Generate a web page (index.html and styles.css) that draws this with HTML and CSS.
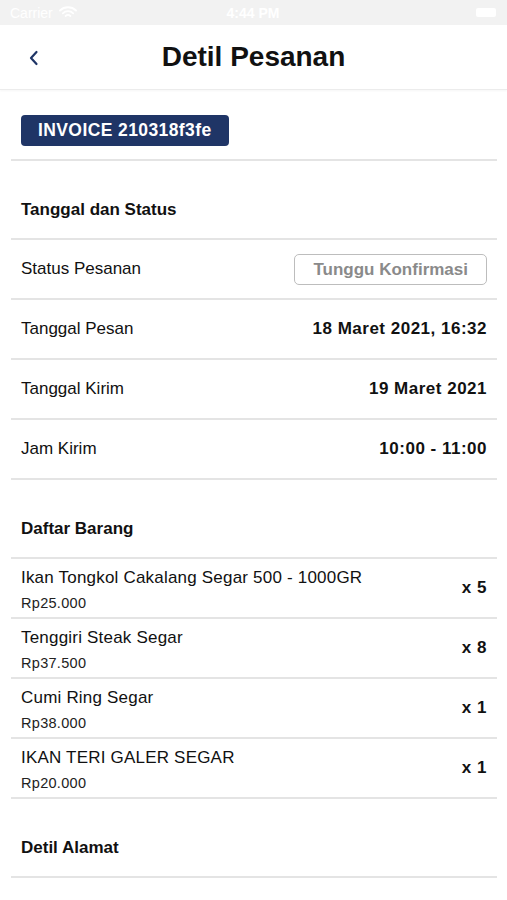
FILE: index.html
```html
<!DOCTYPE html>
<html lang="id">
<head>
    <meta charset="UTF-8">
    <meta name="viewport" content="width=device-width, initial-scale=1.0">
    <title>Detil Pesanan</title>
    <link rel="stylesheet" href="styles.css">
</head>
<body>

    <!-- Status Bar -->
    <div class="status-bar">
        <div class="carrier">
            Carrier
            <svg width="18" height="13" viewBox="0 0 18 13">
                <path d="M1 4.5a11.5 11.5 0 0 1 16 0M3.8 7.3a7.5 7.5 0 0 1 10.4 0M6.6 10a3.5 3.5 0 0 1 4.8 0" fill="none" stroke="#fff" stroke-width="1.8" stroke-linecap="round"/>
            </svg>
        </div>
        <div class="clock">4:44 PM</div>
        <div class="battery"></div>
    </div>

    <!-- Navigation -->
    <div class="nav">
        <svg class="back" width="12" height="16" viewBox="0 0 12 16">
            <path d="M8.5 2L3 8l5.5 6" fill="none" stroke="#1f3566" stroke-width="2.2" stroke-linecap="round" stroke-linejoin="round"/>
        </svg>
        <h1>Detil Pesanan</h1>
    </div>

    <div class="content">
        <div class="invoice-block">
            <span class="invoice">INVOICE 210318f3fe</span>
        </div>

        <!-- Tanggal dan Status -->
        <div class="section-head">Tanggal dan Status</div>
        <div class="row">
            <span>Status Pesanan</span>
            <span class="pill">Tunggu Konfirmasi</span>
        </div>
        <div class="row">
            <span>Tanggal Pesan</span>
            <span class="value">18 Maret 2021, 16:32</span>
        </div>
        <div class="row">
            <span>Tanggal Kirim</span>
            <span class="value">19 Maret 2021</span>
        </div>
        <div class="row">
            <span>Jam Kirim</span>
            <span class="value">10:00 - 11:00</span>
        </div>

        <!-- Daftar Barang -->
        <div class="section-head">Daftar Barang</div>
        <div class="row item">
            <div class="item-info">
                <div class="item-name">Ikan Tongkol Cakalang Segar 500 - 1000GR</div>
                <div class="item-price">Rp25.000</div>
            </div>
            <span class="value">x 5</span>
        </div>
        <div class="row item">
            <div class="item-info">
                <div class="item-name">Tenggiri Steak Segar</div>
                <div class="item-price">Rp37.500</div>
            </div>
            <span class="value">x 8</span>
        </div>
        <div class="row item">
            <div class="item-info">
                <div class="item-name">Cumi Ring Segar</div>
                <div class="item-price">Rp38.000</div>
            </div>
            <span class="value">x 1</span>
        </div>
        <div class="row item">
            <div class="item-info">
                <div class="item-name">IKAN TERI GALER SEGAR</div>
                <div class="item-price">Rp20.000</div>
            </div>
            <span class="value">x 1</span>
        </div>

        <!-- Detil Alamat -->
        <div class="section-head">Detil Alamat</div>
    </div>

</body>
</html>
```

FILE: styles.css
```css
body {
    margin: 0;
    font-family: "Liberation Sans", Arial, sans-serif;
    color: #111;
    background-color: #fff;
}
.status-bar {
    height: 25px;
    background-color: #f2f2f2;
    color: #fff;
    font-size: 14px;
    display: flex;
    align-items: center;
    justify-content: space-between;
    padding: 0 11px 0 10px;
}
.carrier {
    display: flex;
    align-items: center;
    gap: 6px;
    width: 90px;
}
.clock {
    font-weight: bold;
}
.battery {
    width: 20px;
    height: 9px;
    background: #fff;
    border-radius: 2px;
    margin-left: 70px;
}
.nav {
    height: 64px;
    display: flex;
    align-items: center;
    justify-content: center;
    position: relative;
    border-bottom: 1px solid #ececec;
    box-shadow: 0 1px 2px rgba(0, 0, 0, 0.04);
}
.back {
    position: absolute;
    left: 28px;
    top: 25px;
}
h1 {
    margin: 0;
    font-size: 28px;
    font-weight: bold;
    color: #111;
}
.content {
    padding: 0 10px 0 11px;
}
.invoice-block {
    padding: 25px 10px 13px;
    border-bottom: 2px solid #e4e4e4;
}
.invoice {
    display: inline-block;
    background-color: #1f3566;
    color: #fff;
    font-weight: bold;
    font-size: 17.5px;
    letter-spacing: 0.4px;
    height: 31px;
    line-height: 31px;
    padding: 0 17px;
    border-radius: 4px;
}
.section-head {
    height: 20px;
    padding: 39px 10px 18px;
    line-height: 20px;
    font-size: 17px;
    font-weight: bold;
    border-bottom: 2px solid #e4e4e4;
}
.row {
    height: 58px;
    padding: 0 10px;
    display: flex;
    align-items: center;
    justify-content: space-between;
    font-size: 17px;
    border-bottom: 2px solid #e4e4e4;
}
.value {
    font-weight: bold;
    letter-spacing: 0.5px;
}
.pill {
    border: 1px solid #bdbdbd;
    border-radius: 5px;
    height: 29px;
    line-height: 29px;
    padding: 0 18px;
    color: #8a8a8a;
    font-weight: bold;
    letter-spacing: 0;
}
.item-info {
    display: flex;
    flex-direction: column;
    padding-top: 3px;
}
.item-name {
    line-height: 20px;
    letter-spacing: 0.2px;
}
.item-price {
    font-size: 14.5px;
    line-height: 18px;
    margin-top: 6px;
    color: #222;
    letter-spacing: 0.3px;
}
```
